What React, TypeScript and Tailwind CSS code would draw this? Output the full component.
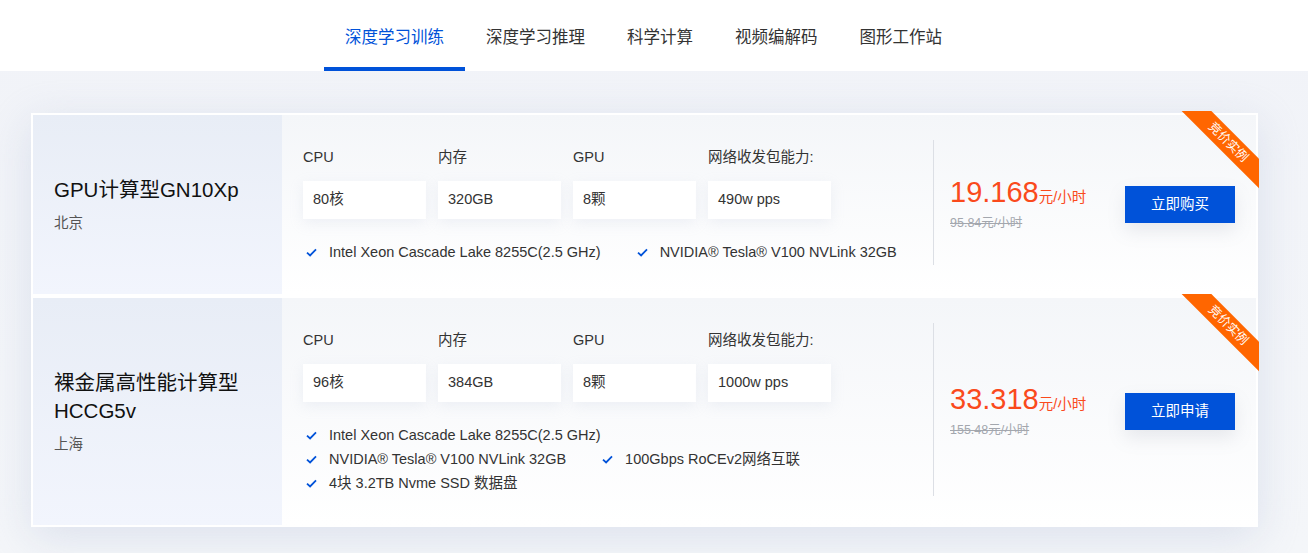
import React from "react"

const tabs = ["深度学习训练", "深度学习推理", "科学计算", "视频编解码", "图形工作站"]

type Product = {
  name: string[]
  region: string
  specs: { label: string; value: string }[]
  features: string[][]
  price: string
  origin: string
  action: string
}

const products: Product[] = [
  {
    name: ["GPU计算型GN10Xp"],
    region: "北京",
    specs: [
      { label: "CPU", value: "80核" },
      { label: "内存", value: "320GB" },
      { label: "GPU", value: "8颗" },
      { label: "网络收发包能力:", value: "490w pps" }
    ],
    features: [["Intel Xeon Cascade Lake 8255C(2.5 GHz)", "NVIDIA® Tesla® V100 NVLink 32GB"]],
    price: "19.168",
    origin: "95.84元/小时",
    action: "立即购买"
  },
  {
    name: ["裸金属高性能计算型", "HCCG5v"],
    region: "上海",
    specs: [
      { label: "CPU", value: "96核" },
      { label: "内存", value: "384GB" },
      { label: "GPU", value: "8颗" },
      { label: "网络收发包能力:", value: "1000w pps" }
    ],
    features: [
      ["Intel Xeon Cascade Lake 8255C(2.5 GHz)"],
      ["NVIDIA® Tesla® V100 NVLink 32GB", "100Gbps RoCEv2网络互联"],
      ["4块 3.2TB Nvme SSD 数据盘"]
    ],
    price: "33.318",
    origin: "155.48元/小时",
    action: "立即申请"
  }
]

function Check() {
  return (
    <svg width="11" height="9" viewBox="0 0 11 9" className="shrink-0">
      <path d="M1 4.6 L4.1 7.4 L10 1.4" fill="none" stroke="#0052d9" strokeWidth="1.8" />
    </svg>
  )
}

function Ribbon() {
  return (
    <div className="absolute -top-[4px] -right-[3px] w-[78px] h-[78px] overflow-hidden pointer-events-none">
      <div className="absolute left-[-13px] top-[20.5px] w-[120px] h-[21px] rotate-45 bg-[#ff6600] flex items-center justify-center text-white text-[12.5px] leading-none">
        竞价实例
      </div>
    </div>
  )
}

function Card({ p }: { p: Product }) {
  return (
    <div className="relative flex border-2 border-white bg-white">
      <div className="w-[249px] shrink-0 pl-[21px] flex flex-col justify-center bg-[linear-gradient(180deg,#e8edf6,#f2f5fd)]">
        <div className="text-[20.5px] leading-[28px] text-[#111]">
          {p.name.map((n) => (
            <div key={n}>{n}</div>
          ))}
        </div>
        <div className="mt-[9px] text-[14.5px] leading-[20px] text-[#555]">{p.region}</div>
      </div>
      <div className="flex flex-1 bg-[linear-gradient(180deg,#f4f6f9,#ffffff)]">
        <div className="w-[651px] shrink-0 pl-[21px] pt-[32px] pb-[30px]">
          <div className="flex gap-[12px]">
            {p.specs.map((s) => (
              <div key={s.label} className="w-[123px]">
                <div className="text-[14.5px] leading-[20px] text-[#333]">{s.label}</div>
                <div className="mt-[14px] h-[38px] bg-white pl-[10px] flex items-center text-[14.5px] text-[#333] shadow-[0_4px_14px_rgba(180,190,210,0.18)]">
                  {s.value}
                </div>
              </div>
            ))}
          </div>
          <div className="mt-[21px] pl-[3px]">
            {p.features.map((row, i) => (
              <div key={i} className="flex gap-[36px] leading-[24px] text-[14.5px] text-[#333]">
                {row.map((f) => (
                  <div key={f} className="flex items-center gap-[12px]">
                    <Check />
                    <span>{f}</span>
                  </div>
                ))}
              </div>
            ))}
          </div>
        </div>
        <div className="w-px bg-[#dcdfe5] mt-[25px] mb-[29px]" />
        <div className="flex flex-1 items-center justify-between pl-[16px] pr-[21px]">
          <div>
            <div className="flex items-baseline text-[#fa4a1c]">
              <span className="text-[29px] leading-[30px]">{p.price}</span>
              <span className="text-[14.5px]">元/小时</span>
            </div>
            <div className="mt-[5px] text-[12.5px] leading-[18px] text-[#a3a7ae] line-through">{p.origin}</div>
          </div>
          <button
            type="button"
            className="w-[110px] h-[37px] bg-[#0052d9] text-white text-[14.5px] shadow-[0_8px_18px_rgba(120,130,150,0.15)]">
            {p.action}
          </button>
        </div>
      </div>
      <Ribbon />
    </div>
  )
}

export default function App() {
  return (
    <div className="w-full min-h-[553px] bg-[linear-gradient(180deg,#e6e9f2_0px,#f1f3f8_30px,#f4f6f9_100%)] font-['Liberation_Sans','Noto_Sans_CJK_SC',sans-serif] overflow-hidden">
      <nav className="h-[71px] bg-white flex justify-center pr-[21px]">
        {tabs.map((t, i) => (
          <div
            key={t}
            className={
              "relative h-full px-[21px] pt-[3px] flex items-center text-[16.5px] " +
              (i === 0 ? "text-[#0052d9]" : "text-[#333]")
            }>
            {t}
            {i === 0 ? <div className="absolute left-0 right-0 bottom-0 h-[4px] bg-[#0052d9]" /> : null}
          </div>
        ))}
      </nav>
      <div className="mt-[42px] ml-[31px] w-[1227px] flex flex-col shadow-[0_10px_40px_rgba(190,200,222,0.45)]">
        {products.map((p) => (
          <Card key={p.price} p={p} />
        ))}
      </div>
    </div>
  )
}
